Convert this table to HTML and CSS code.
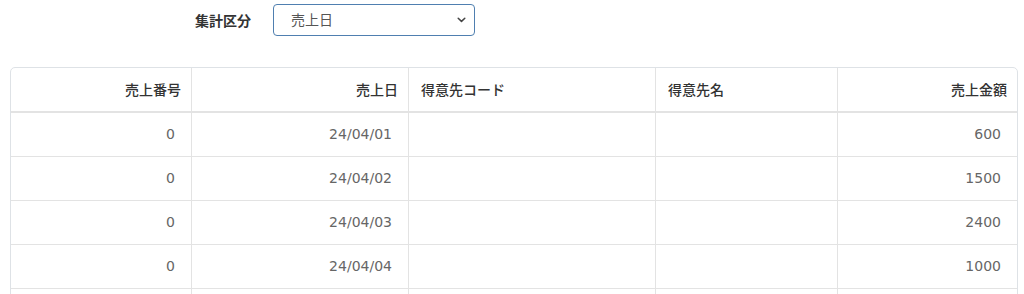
FILE: index.html
```html
<!DOCTYPE html>
<html lang="ja">
<head>
<meta charset="utf-8">
<title>売上集計</title>
<link rel="stylesheet" href="styles.css">
</head>
<body>
<div class="filter">
  <label class="filter-label">集計区分</label>
  <div class="select">
    <span class="select-value">売上日</span>
    <svg class="chevron" width="9" height="6" viewBox="0 0 9 6"><path d="M1.2 1.2 L4.5 4.4 L7.8 1.2" fill="none" stroke="#444" stroke-width="1.5" stroke-linecap="round" stroke-linejoin="round"/></svg>
  </div>
</div>
<div class="card">
  <table class="grid">
    <colgroup>
      <col class="c1"><col class="c2"><col class="c3"><col class="c4"><col class="c5">
    </colgroup>
    <thead>
      <tr>
        <th class="r">売上番号</th>
        <th class="r">売上日</th>
        <th class="l">得意先コード</th>
        <th class="l">得意先名</th>
        <th class="r last">売上金額</th>
      </tr>
    </thead>
    <tbody>
      <tr><td class="r">0</td><td class="r">24/04/01</td><td></td><td></td><td class="r last">600</td></tr>
      <tr><td class="r">0</td><td class="r">24/04/02</td><td></td><td></td><td class="r last">1500</td></tr>
      <tr><td class="r">0</td><td class="r">24/04/03</td><td></td><td></td><td class="r last">2400</td></tr>
      <tr><td class="r">0</td><td class="r">24/04/04</td><td></td><td></td><td class="r last">1000</td></tr>
      <tr class="more"><td></td><td></td><td></td><td></td><td class="last"></td></tr>
    </tbody>
  </table>
</div>
</body>
</html>
```
FILE: styles.css
```css
* { box-sizing: border-box; }
html, body { margin: 0; padding: 0; background: #fff; }
body {
  font-family: "DejaVu Sans", "Noto Sans CJK JP", sans-serif;
  font-size: 14px;
  color: #333;
  overflow: hidden;
}
.filter {
  display: flex;
  align-items: center;
  padding: 4px 0 0 195px;
  gap: 22px;
}
.filter-label {
  font-family: "Noto Sans CJK JP", sans-serif;
  font-weight: 700;
  color: #333;
  font-size: 14px;
  line-height: 20px;
}
.select {
  width: 202px;
  height: 32px;
  border: 1px solid #4f7fb0;
  border-radius: 4px;
  display: flex;
  align-items: center;
  justify-content: space-between;
  padding: 0 8px 0 17px;
  color: #555;
}
.select-value { line-height: 20px; }
.chevron { display: block; }
.card {
  margin: 31px 6px 0 10px;
  border: 1px solid #dee2e6;
  border-radius: 5px;
  overflow: hidden;
  height: 300px;
}
.grid {
  width: 100%;
  table-layout: fixed;
  border-collapse: separate;
  border-spacing: 0;
}
.c1 { width: 181px; }
.c2 { width: 217px; }
.c3 { width: 247px; }
.c4 { width: 182px; }
.c5 { width: auto; }
.grid th, .grid td {
  border-right: 1px solid #e3e3e3;
  border-bottom: 1px solid #e3e3e3;
  line-height: 20px;
  height: 44px;
  padding: 11px 16px 12px 12px;
  white-space: nowrap;
}
.grid th {
  font-family: "Noto Sans CJK JP", sans-serif;
  font-weight: 500;
  color: #333;
  height: 45px;
  padding: 11px 10px 12px 12px;
  border-bottom: 2px solid #e3e3e3;
}
.grid td { color: #666; }
.grid .last { border-right: none; }
.r { text-align: right; }
.l { text-align: left; }
```
